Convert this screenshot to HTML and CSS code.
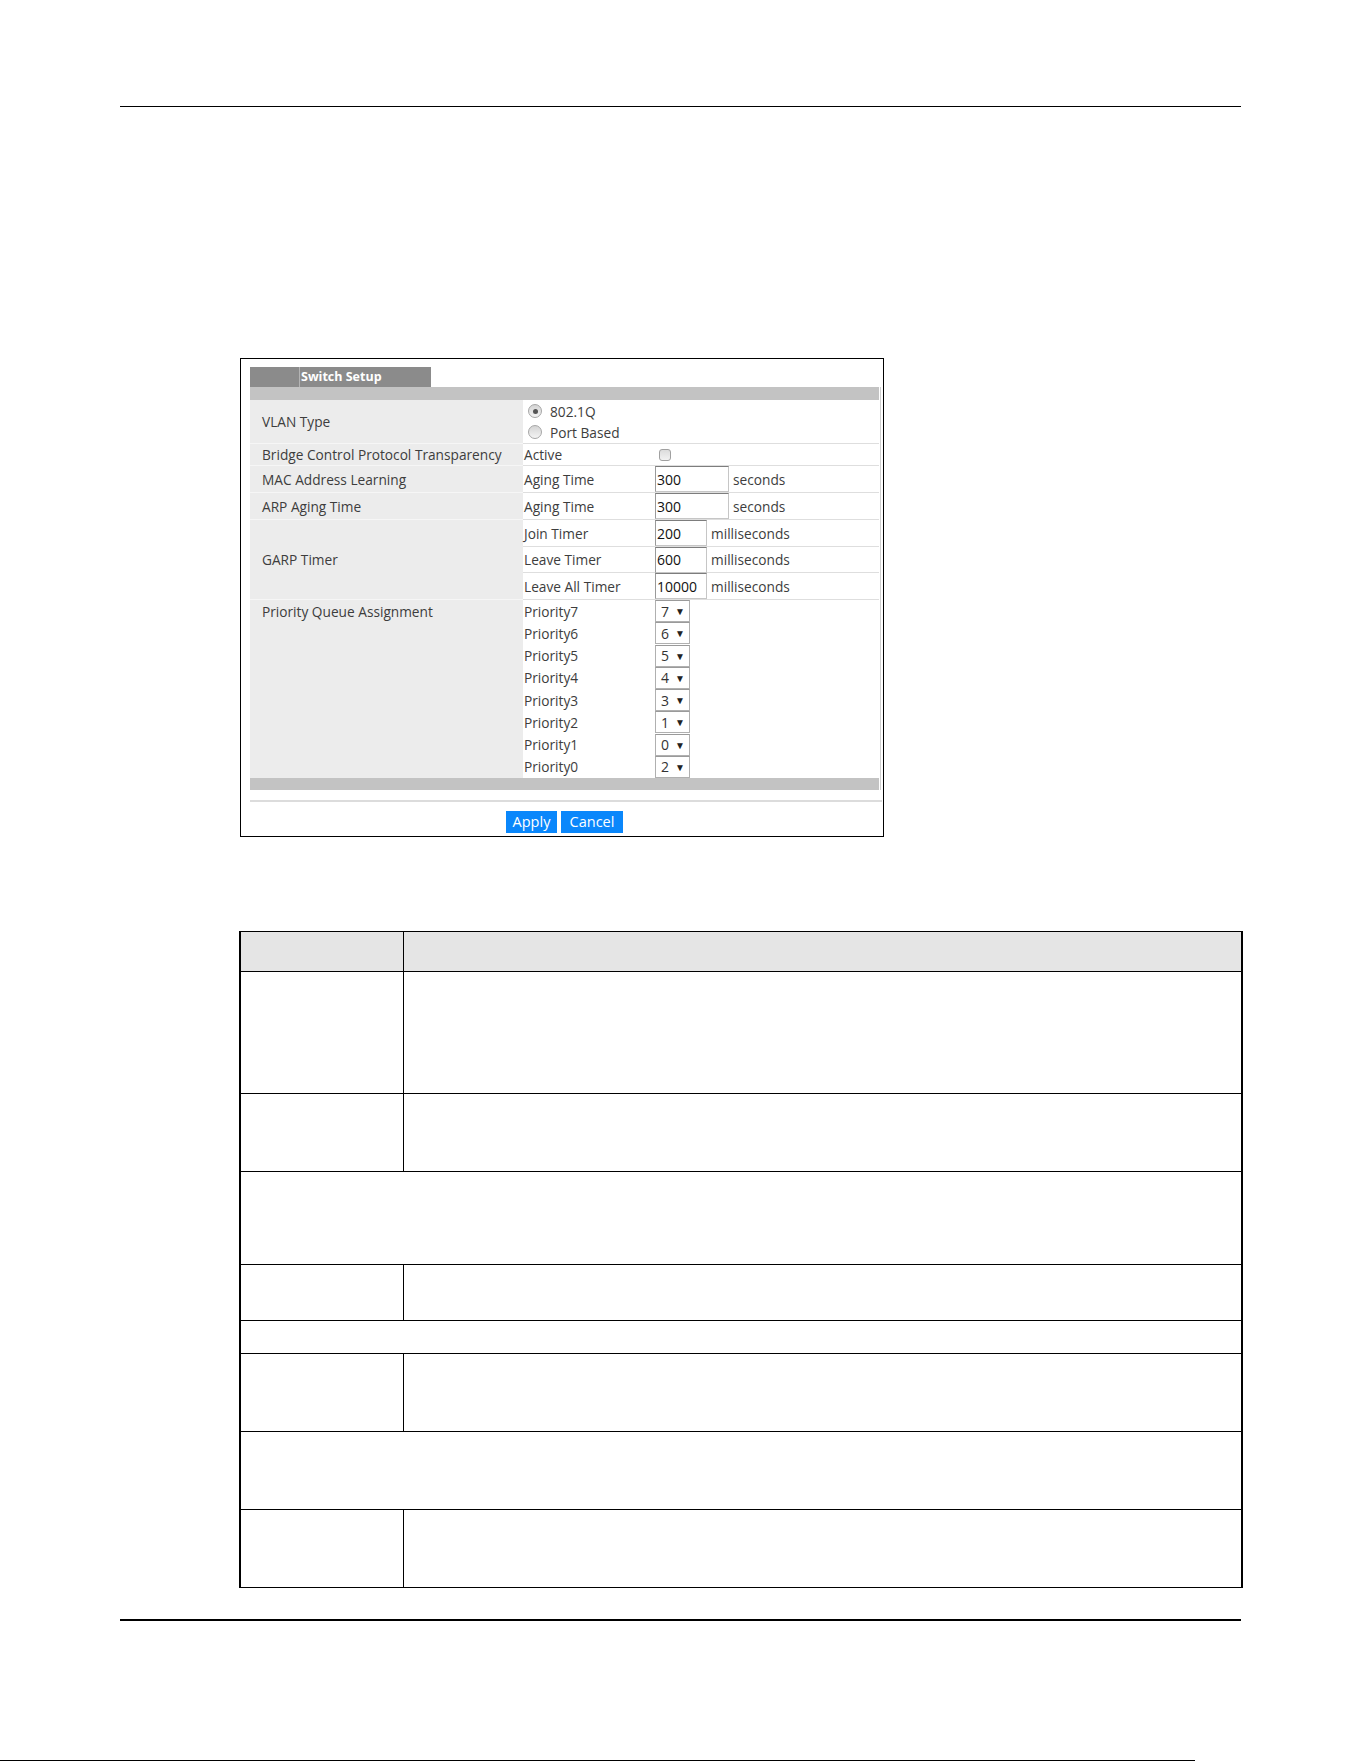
FILE: index.html
```html
<!DOCTYPE html>
<html lang="en">
    <head>
        <title>Switch Setup</title>
        <meta charset="utf-8" name="viewport" content="width=device-width, initial-scale=1">

        <link rel="stylesheet" href="styles.css">
    </head>
    <body>
        <div class="page">
            <div class="rule-top"></div>

            <div class="panel">
                <div class="tab"><span>Switch Setup</span></div>
                <div class="form">
                    <div class="bar"></div>

                    <div class="lbl">VLAN Type</div>
                    <div class="val wide radios">
                        <div class="opt"><span class="radio checked"></span>802.1Q</div>
                        <div class="opt"><span class="radio"></span>Port Based</div>
                    </div>

                    <div class="lbl">Bridge Control Protocol Transparency</div>
                    <div class="val sub">Active</div>
                    <div class="val ctl"><span class="check"></span></div>

                    <div class="lbl">MAC Address Learning</div>
                    <div class="val sub">Aging Time</div>
                    <div class="val ctl"><input class="field long" type="text" value="300"><span class="unit">seconds</span></div>

                    <div class="lbl">ARP Aging Time</div>
                    <div class="val sub">Aging Time</div>
                    <div class="val ctl"><input class="field long" type="text" value="300"><span class="unit">seconds</span></div>

                    <div class="lbl garp">GARP Timer</div>
                    <div class="val sub">Join Timer</div>
                    <div class="val ctl"><input class="field" type="text" value="200"><span class="unit">milliseconds</span></div>
                    <div class="val sub">Leave Timer</div>
                    <div class="val ctl"><input class="field" type="text" value="600"><span class="unit">milliseconds</span></div>
                    <div class="val sub">Leave All Timer</div>
                    <div class="val ctl"><input class="field" type="text" value="10000"><span class="unit">milliseconds</span></div>

                    <div class="lbl prio">Priority Queue Assignment</div>
                    <div class="val sub plain">Priority7</div>
                    <div class="val ctl plain"><span class="sel">7<i>&#9660;</i></span></div>
                    <div class="val sub plain">Priority6</div>
                    <div class="val ctl plain"><span class="sel">6<i>&#9660;</i></span></div>
                    <div class="val sub plain">Priority5</div>
                    <div class="val ctl plain"><span class="sel">5<i>&#9660;</i></span></div>
                    <div class="val sub plain">Priority4</div>
                    <div class="val ctl plain"><span class="sel">4<i>&#9660;</i></span></div>
                    <div class="val sub plain">Priority3</div>
                    <div class="val ctl plain"><span class="sel">3<i>&#9660;</i></span></div>
                    <div class="val sub plain">Priority2</div>
                    <div class="val ctl plain"><span class="sel">1<i>&#9660;</i></span></div>
                    <div class="val sub plain">Priority1</div>
                    <div class="val ctl plain"><span class="sel">0<i>&#9660;</i></span></div>
                    <div class="val sub plain">Priority0</div>
                    <div class="val ctl plain"><span class="sel">2<i>&#9660;</i></span></div>

                    <div class="bar"></div>
                </div>
                <div class="sep"></div>
                <div class="buttons">
                    <button type="button" class="apply">Apply</button>
                    <button type="button" class="cancel">Cancel</button>
                </div>
            </div>

            <!-- description table, cells are empty in the source -->
            <div class="desc">
                <div class="cell head first"></div>
                <div class="cell head"></div>
                <div class="cell first r1"></div>
                <div class="cell r1"></div>
                <div class="cell first r2"></div>
                <div class="cell r2"></div>
                <div class="cell full r3"></div>
                <div class="cell first r4"></div>
                <div class="cell r4"></div>
                <div class="cell full r5"></div>
                <div class="cell first r6"></div>
                <div class="cell r6"></div>
                <div class="cell full r7"></div>
                <div class="cell first last r8"></div>
                <div class="cell last r8"></div>
            </div>

            <div class="rule-bottom"></div>
            <div class="edge"></div>
        </div>
    </body>
</html>
```

FILE: styles.css
```css
body{
    margin: 0;
    background: #fff;
    font-family: "Open Sans", "Liberation Sans", sans-serif;
}
.page{
    height: 1761px;
    overflow: hidden;
}
.rule-top{
    margin: 106px 0 0 120px;
    width: 1121px;
    height: 1px;
    background: #000;
}

/* ---------- switch setup panel ---------- */
.panel{
    margin: 251px 0 0 240px;
    width: 644px;
    height: 479px;
    box-sizing: border-box;
    border: 1px solid #000;
    padding: 8px 1px 0 9px;
}
.tab{
    width: 181px;
    height: 20px;
    background: #8b8b8b;
    padding-left: 49px;
    box-sizing: border-box;
}
.tab span{
    display: block;
    height: 20px;
    border-left: 1px solid #b4b4b4;
    padding-left: 1px;
    color: #fff;
    font-weight: bold;
    font-size: 12.5px;
    line-height: 20px;
}
.form{
    display: grid;
    width: 630px;
    grid-template-columns: 273px 132px 224px;
    grid-template-rows: 13px 44px 22px 27px 27px 27px 26px 27px repeat(8, 22.25px) 12px;
    border-right: 1px solid #cfcfcf;
    font-size: 13.7px;
    color: #3d3d3d;
}
.bar{
    grid-column: 1 / -1;
    background: #c3c3c3;
}
.lbl{
    background: #ececec;
    border-bottom: 1px solid #f6f6f6;
    padding-left: 12px;
    display: flex;
    align-items: center;
    white-space: nowrap;
}
.garp{
    grid-row: span 3;
}
.prio{
    grid-row: span 8;
    align-items: flex-start;
    padding-top: 2px;
    border-bottom: none;
}
.val{
    border-bottom: 1px solid #dedede;
    display: flex;
    align-items: center;
    white-space: nowrap;
}
.val.plain{
    border-bottom: none;
}
.wide{
    grid-column: span 2;
}
.radios{
    flex-direction: column;
    align-items: flex-start;
    justify-content: center;
    padding-left: 5px;
}
.opt{
    display: flex;
    align-items: center;
    height: 21px;
}
.radio{
    width: 14px;
    height: 14px;
    box-sizing: border-box;
    border-radius: 50%;
    border: 1px solid #a6a6a6;
    background: linear-gradient(#d4d4d4, #f4f4f4);
    margin-right: 8px;
    position: relative;
}
.radio.checked::after{
    content: "";
    position: absolute;
    left: 3.5px;
    top: 3.5px;
    width: 5px;
    height: 5px;
    border-radius: 50%;
    background: #555;
}
.sub{
    padding-left: 1px;
}
.check{
    width: 12px;
    height: 12px;
    box-sizing: border-box;
    border: 1px solid #a0a0a0;
    border-radius: 3px;
    background: linear-gradient(#dcdcdc, #f2f2f2);
    margin-left: 4px;
}
.field{
    width: 52px;
    height: 26px;
    box-sizing: border-box;
    border: 1px solid #9a9a9a;
    border-top-color: #7d7d7d;
    border-right-color: #c6c6c6;
    border-bottom-color: #c6c6c6;
    padding: 0 1px;
    margin: 0;
    font-family: inherit;
    font-size: 14px;
    color: #111;
    background: #fff;
    outline: none;
}
.field.long{
    width: 74px;
}
.unit{
    margin-left: 4px;
}
.sel{
    width: 35px;
    height: 22px;
    box-sizing: border-box;
    border: 1px solid #b0b0b0;
    border-top-color: #9a9a9a;
    display: flex;
    align-items: center;
    padding-left: 5px;
    font-size: 14px;
    color: #333;
}
.sel i{
    font-style: normal;
    font-size: 10px;
    margin-left: 6px;
    color: #222;
}
.sep{
    margin-top: 10px;
    width: 632px;
    height: 2px;
    background: #dcdcdc;
}
.buttons{
    display: flex;
    gap: 4px;
    margin-top: 9px;
    padding-left: 256px;
}
.buttons button{
    height: 22px;
    border: none;
    border-radius: 0;
    background: #0a87fb;
    color: #fff;
    font-family: inherit;
    font-size: 14.5px;
    padding: 0;
    line-height: 22px;
}
.apply{
    width: 51px;
}
.cancel{
    width: 62px;
}

/* ---------- description table ---------- */
.desc{
    margin: 94px 0 0 239px;
    width: 1004px;
    box-sizing: border-box;
    border: 2px solid #000;
    border-top-width: 1px;
    border-bottom-width: 1px;
    display: grid;
    grid-template-columns: 163px 1fr;
}
.cell{
    border-bottom: 1px solid #000;
    box-sizing: border-box;
}
.cell.first{
    border-right: 1px solid #000;
}
.cell.full{
    grid-column: 1 / -1;
}
.cell.last{
    border-bottom: none;
}
.head{
    height: 40px;
    background: #e5e5e5;
}
.r1{ height: 122px; }
.r2{ height: 78px; }
.r3{ height: 93px; }
.r4{ height: 56px; }
.r5{ height: 33px; }
.r6{ height: 78px; }
.r7{ height: 78px; }
.r8{ height: 77px; }

.rule-bottom{
    margin: 31px 0 0 120px;
    width: 1121px;
    height: 2px;
    background: #000;
}
.edge{
    margin-top: 139px;
    width: 1195px;
    height: 1px;
    background: #000;
}
```
